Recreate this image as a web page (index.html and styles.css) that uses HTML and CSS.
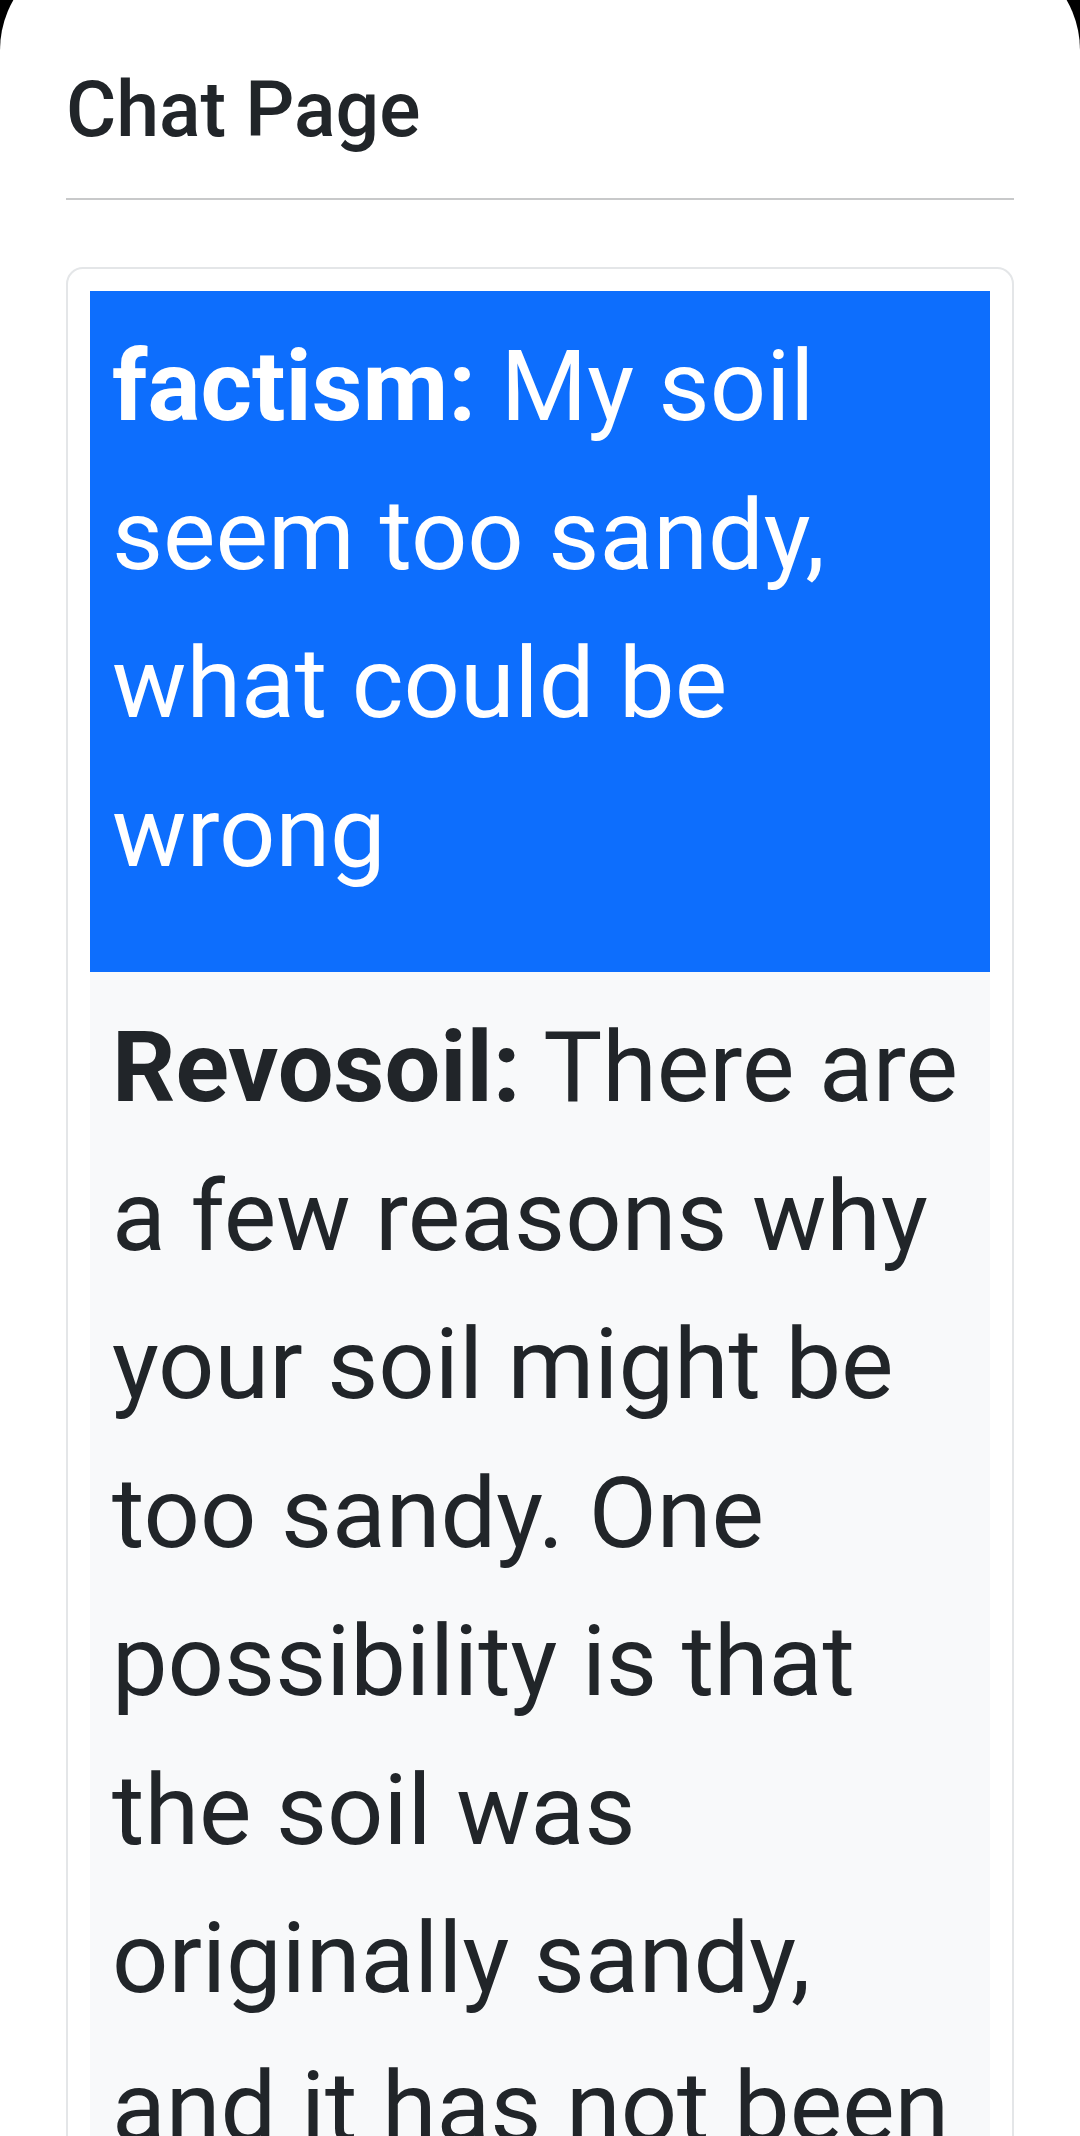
FILE: index.html
```html
<!DOCTYPE html>
<html lang="en">
<head>
<meta charset="utf-8">
<title>Chat Page</title>
<link rel="stylesheet" href="styles.css">
</head>
<body>
<div class="screen">
  <div class="container">
    <h1 class="title">Chat Page</h1>
    <hr class="rule">
    <div class="card">
      <div class="card-body">
        <div class="msg msg-user">
          <p><strong>factism:</strong> My soil seem too sandy, what could be wrong</p>
        </div>
        <div class="msg msg-bot">
          <p><strong>Revosoil:</strong> There are a few reasons why your soil might be too sandy. One possibility is that the soil was originally sandy, and it has not been amended with enough organic matter over time. Another possibility is that erosion has removed the finer particles of clay and silt from the soil.</p>
        </div>
      </div>
    </div>
  </div>
</div>
</body>
</html>
```
FILE: styles.css
```css
html, body {
  margin: 0;
  padding: 0;
  background: #000;
}

body {
  font-family: Roboto, "Noto Sans", "Liberation Sans", sans-serif;
  color: #212529;
  overflow: hidden;
  height: 2136px;
}

.screen {
  background: #fff;
  margin-top: -50px;
  padding-top: 50px;
  border-radius: 100px 100px 0 0;
  min-height: 2300px;
}

.container {
  padding: 64px 66px 0 66px;
}

.title {
  margin: 0;
  font-size: 77px;
  font-weight: 500;
  line-height: 1.2;
  color: #212529;
}

.rule {
  margin: 42px 0 0 0;
  border: 0;
  border-top: 2px solid #c8c9ca;
  height: 0;
}

.card {
  margin-top: 67px;
  border: 2px solid #e4e6e8;
  border-radius: 17px;
  background: #fff;
}

.card-body {
  padding: 22px 22px;
}

.msg {
  padding: 21px 22px 22px 22px;
  font-size: 99px;
  line-height: 148.5px;
}

.msg p {
  margin: 0 0 44px 0;
}

.msg strong {
  font-weight: 700;
}

.msg-user {
  background: #0d6efd;
  color: #fff;
}

.msg-bot {
  background: #f8f9fa;
  color: #212529;
}
```
